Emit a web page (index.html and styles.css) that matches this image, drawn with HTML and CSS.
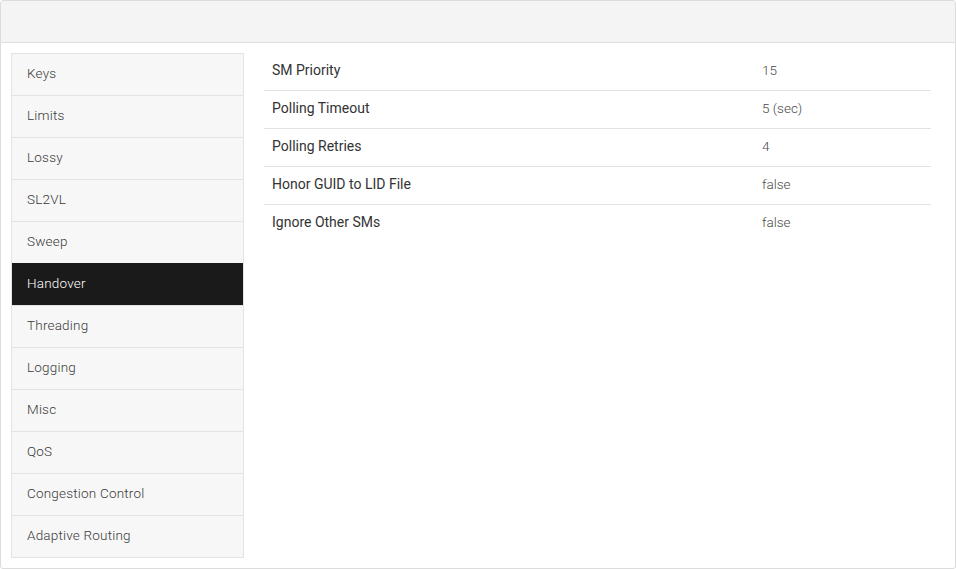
FILE: index.html
```html
<!DOCTYPE html>
<html>
<head>
<meta charset="utf-8">
<link rel="stylesheet" href="styles.css">
</head>
<body>
<div class="panel">
  <div class="panel-head"></div>
  <div class="panel-body">
    <ul class="side-nav">
      <li class="nav-item">Keys</li>
      <li class="nav-item">Limits</li>
      <li class="nav-item">Lossy</li>
      <li class="nav-item">SL2VL</li>
      <li class="nav-item">Sweep</li>
      <li class="nav-item active">Handover</li>
      <li class="nav-item">Threading</li>
      <li class="nav-item">Logging</li>
      <li class="nav-item">Misc</li>
      <li class="nav-item">QoS</li>
      <li class="nav-item">Congestion Control</li>
      <li class="nav-item">Adaptive Routing</li>
    </ul>
    <table class="props">
      <tr><td class="label">SM Priority</td><td class="value">15</td></tr>
      <tr><td class="label">Polling Timeout</td><td class="value">5 (sec)</td></tr>
      <tr><td class="label">Polling Retries</td><td class="value">4</td></tr>
      <tr><td class="label">Honor GUID to LID File</td><td class="value">false</td></tr>
      <tr><td class="label">Ignore Other SMs</td><td class="value">false</td></tr>
    </table>
  </div>
</div>
</body>
</html>
```
FILE: styles.css
```css
html, body {
  margin: 0;
  padding: 0;
  background: #ffffff;
}
body {
  font-family: Roboto, "Liberation Sans", sans-serif;
  font-size: 13px;
  color: #333;
}
.panel {
  width: 956px;
  height: 569px;
  box-sizing: border-box;
  border: 1px solid #dcdcdc;
  border-radius: 3px;
  overflow: hidden;
  background: #fff;
}
.panel-head {
  height: 41px;
  background: #f4f4f4;
  border-bottom: 1px solid #dedede;
}
.panel-body {
  display: flex;
  align-items: flex-start;
  padding: 10px 24px 0 10px;
  gap: 20px;
}
.side-nav {
  list-style: none;
  margin: 0;
  padding: 0;
  width: 233px;
  flex: none;
  border: 1px solid #e3e3e3;
  box-sizing: border-box;
  background: #f7f7f7;
}
.nav-item {
  height: 41px;
  line-height: 38px;
  padding-left: 15px;
  border-top: 1px solid #e3e3e3;
  color: #3a3a3a;
  font-size: 13.5px;
  font-weight: 300;
  letter-spacing: 0.2px;
}
.nav-item:first-child {
  border-top: none;
}
.nav-item.active {
  background: #1a1a1a;
  color: #fff;
  border-top-color: #1a1a1a;
}
.props {
  flex: 1;
  border-collapse: collapse;
  margin-top: -1px;
}
.props td {
  height: 38px;
  padding: 0 8px 2px;
  box-sizing: border-box;
  border-bottom: 1px solid #e2e2e2;
  vertical-align: middle;
}
.props tr:last-child td {
  border-bottom: none;
}
.label {
  width: 490px;
  font-size: 14px;
  font-weight: 400;
  color: #333;
}
.value {
  font-size: 13.5px;
  font-weight: 300;
  color: #4a4a4a;
}
```
